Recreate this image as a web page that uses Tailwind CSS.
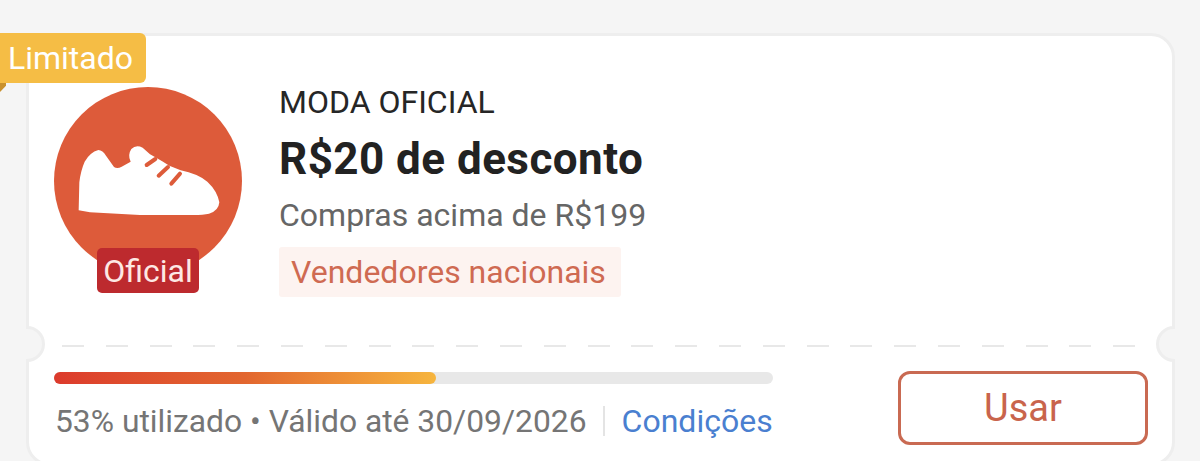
<!DOCTYPE html>
<html lang="pt-BR">
<head>
  <meta charset="UTF-8">
  <meta name="viewport" content="width=device-width, initial-scale=1.0">
  <title>Cupom</title>
  <script src="https://cdn.jsdelivr.net/npm/@tailwindcss/browser@4"></script>
</head>
<body class="bg-[#f5f5f5] h-[461px] overflow-hidden font-['Roboto',sans-serif]">
  <div class="pt-[33px] pl-[26px]">
    <!-- Coupon card -->
    <div class="relative w-[1149px] h-[433px] bg-white border-[3px] border-[#eeeeee] rounded-[24px]">
      <!-- Limitado ribbon -->
      <div class="absolute left-[-29px] top-[-3px] w-[146px] h-[50px] bg-[#f5bd45] rounded-r-[6px] flex items-center pl-[8px] text-white text-[32px] leading-none">Limitado</div>
      <div class="absolute left-[-29px] top-[47px] w-[6px] h-[9px] bg-[#c9912d] [clip-path:polygon(0_0,100%_0,100%_30%,0_100%)]"></div>

      <!-- Ticket notches -->
      <div class="absolute left-[-20px] top-[290px] size-[36px] rounded-full bg-[#f5f5f5] border-[3px] border-[#eeeeee] [clip-path:inset(0_0_0_17px)]"></div>
      <div class="absolute right-[-20px] top-[290px] size-[36px] rounded-full bg-[#f5f5f5] border-[3px] border-[#eeeeee] [clip-path:inset(0_17px_0_0)]"></div>

      <!-- Top part -->
      <div class="h-[309px] pl-[25px] pt-[51px] flex">
        <div class="relative w-[188px] h-[188px] shrink-0 rounded-full bg-[#dd5b3a]">
          <svg class="absolute left-[16px] top-[52px] w-[160px] h-[80px]" viewBox="0 0 480 240">
            <path fill="#fff" d="M26 214 L28 130 Q32 95 44 68 Q60 40 85 33 Q98 34 108 50 L132 84 Q142 90 155 83 L182 68 Q172 48 184 30 Q198 16 218 26 L240 46 Q262 58 298 80 L332 94 Q382 104 412 128 Q442 156 448 190 Q446 216 417 224 Q400 228 370 228 L210 228 L60 220 Z"/>
            <path fill="none" stroke="#dd5b3a" stroke-width="12" stroke-linecap="round" d="M230 78 L256 60 M266 110 L294 84 M304 134 L330 104"/>
          </svg>
          <div class="absolute left-[43px] top-[161px] w-[102px] h-[45px] bg-[#bd2a2e] rounded-[5px] flex items-center justify-center text-[#fde8e4] text-[32px] leading-none">Oficial</div>
        </div>
        <div class="ml-[37px] -mt-[2px]">
          <p class="text-[#262626] text-[32px] leading-[34px]">MODA OFICIAL</p>
          <p class="text-[#222222] text-[44px] font-bold leading-[46px] mt-[17px] tracking-[0.45px] whitespace-nowrap">R$20 de desconto</p>
          <p class="text-[#666666] text-[32px] leading-[36px] mt-[15px]">Compras acima de R$199</p>
          <p class="inline-block mt-[14px] h-[50px] w-[342px] bg-[#fdf3f0] rounded-[3px] pl-[12px] text-[#cf6a52] text-[32px] leading-[50px]">Vendedores nacionais</p>
        </div>
      </div>

      <!-- Dashed divider -->
      <div class="ml-[33px] mr-[36px] h-[2px] bg-[repeating-linear-gradient(90deg,#e8e8e8_0_22px,transparent_22px_43.8px)]"></div>

      <!-- Bottom part -->
      <div class="pl-[25px] pr-[24px] pt-[25px] flex items-start justify-between">
        <div class="w-[719px]">
          <div class="h-[12px] bg-[#e8e8e8] rounded-full">
            <div class="h-full w-[382px] rounded-full bg-gradient-to-r from-[#dc3a2c] via-[#e2662f] to-[#f6b53e]"></div>
          </div>
          <div class="mt-[18px] flex items-center text-[31.8px] leading-[38px] whitespace-nowrap">
            <span class="text-[#757575] ml-[1px]">53% utilizado • Válido até 30/09/2026</span>
            <span class="w-[2px] h-[30px] shrink-0 bg-[#e4e4e4] ml-[16px] mr-[17px]"></span>
            <span class="text-[#4a7fd0] text-[32px]">Condições</span>
          </div>
        </div>
        <button class="w-[250px] h-[74px] -mt-[1px] border-[3px] border-[#c96a52] rounded-[12px] text-[#c9644c] text-[38px] leading-none">Usar</button>
      </div>
    </div>
  </div>
</body>
</html>
